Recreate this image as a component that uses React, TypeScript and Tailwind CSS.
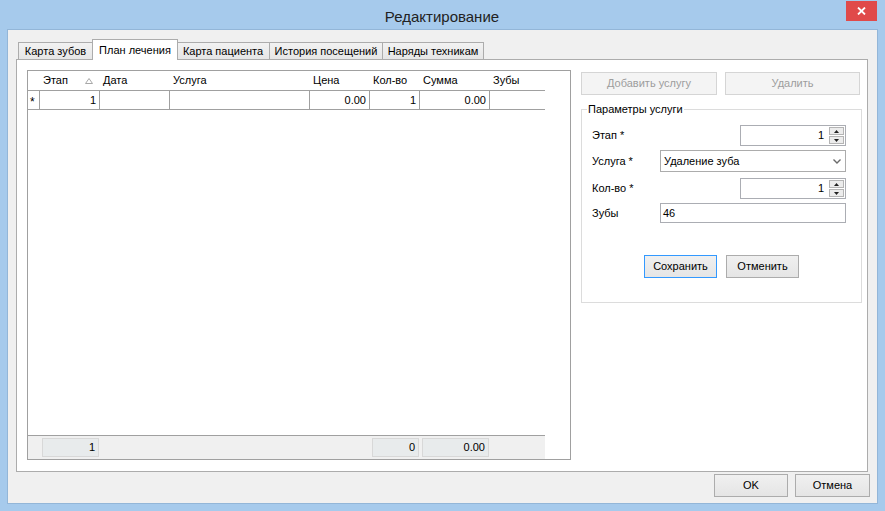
import React from "react";

const tabs = [
  { label: "Карта зубов", w: "w-[75px]" },
  { label: "План лечения", w: "w-[86px]", active: true },
  { label: "Карта пациента", w: "w-[94px]" },
  { label: "История посещений", w: "w-[114px]" },
  { label: "Наряды техникам", w: "w-[102px]" },
];

const columns = [
  { title: "Этап", w: "w-[60px]", value: "1", sort: true },
  { title: "Дата", w: "w-[70px]", value: "" },
  { title: "Услуга", w: "w-[140px]", value: "" },
  { title: "Цена", w: "w-[60px]", value: "0.00" },
  { title: "Кол-во", w: "w-[50px]", value: "1" },
  { title: "Сумма", w: "w-[70px]", value: "0.00" },
  { title: "Зубы", w: "w-[55px]", value: "" },
];

// footer totals, aligned to the column slots
const totals: (string | null)[] = ["1", null, null, null, "0", "0.00", null];

function WinButton({ children, className = "", primary = false, disabled = false }: { children: React.ReactNode; className?: string; primary?: boolean; disabled?: boolean }) {
  const look = disabled
    ? "bg-[#f4f4f4] border-[#d5d5d5] text-[#9d9d9d]"
    : primary
      ? "bg-gradient-to-b from-[#f0f0f0] to-[#e5e5e5] border-[#3399ff] text-black"
      : "bg-gradient-to-b from-[#f0f0f0] to-[#e5e5e5] border-[#acacac] text-black";
  return <button className={`h-[23px] border flex items-center justify-center leading-none ${look} ${className}`}>{children}</button>;
}

function Spinner({ value }: { value: string }) {
  return (
    <div className="w-[106px] h-[21px] border border-[#abadb3] bg-white flex items-center">
      <div className="flex-1 text-right pr-[5px]">{value}</div>
      <div className="w-[15px] h-full flex flex-col gap-px py-px mr-px">
        <div className="flex-1 border border-[#b4b4b4] bg-[#ececec] flex items-center justify-center">
          <svg width="5" height="3" viewBox="0 0 5 3"><path d="M0 3 L2.5 0 L5 3 Z" fill="#202020" /></svg>
        </div>
        <div className="flex-1 border border-[#b4b4b4] bg-[#ececec] flex items-center justify-center">
          <svg width="5" height="3" viewBox="0 0 5 3"><path d="M0 0 L5 0 L2.5 3 Z" fill="#202020" /></svg>
        </div>
      </div>
    </div>
  );
}

export default function App() {
  return (
    <div className="w-[885px] h-[511px] bg-[#a6caec] flex flex-col font-['Liberation_Sans',Arial,sans-serif] text-[11px] text-black overflow-hidden">
      {/* Title bar */}
      <div className="h-[29px] shrink-0 flex pl-[38px]">
        <div className="flex-1 text-center text-[15px] text-[#222] pt-[9px] leading-none">Редактирование</div>
        <div className="w-[31px] h-[20px] mt-px mr-[8px] bg-[#e04a4a] flex items-center justify-center">
          <svg width="9" height="8" viewBox="0 0 9 8">
            <path d="M1 0.5 L8 7.5 M8 0.5 L1 7.5" stroke="white" strokeWidth="1.8" />
          </svg>
        </div>
      </div>

      {/* Client area */}
      <div className="flex-1 mx-[7px] mb-[7px] border border-[#93b6d8] bg-[#f0f0f0] flex flex-col pt-[9px]">
        {/* Tab strip */}
        <div className="h-[20px] flex items-end pl-[10px]">
          {tabs.map((t, i) => (
            <div
              key={t.label}
              className={`${t.w} ${i > 0 ? "-ml-px" : ""} border-t border-x border-[#acacac] flex items-center justify-center ${
                t.active ? "h-[21px] -mb-px bg-white relative z-10 -ml-[2px] -mr-[1px]" : "h-[17px] bg-gradient-to-b from-[#f2f2f2] to-[#e6e6e6]"
              }`}
            >
              {t.label}
            </div>
          ))}
        </div>

        {/* Tab page */}
        <div className="ml-[8px] w-[852px] h-[413px] shrink-0 border border-[#acacac] bg-white flex items-start pl-[10px] pt-[10px]">
          {/* Data grid */}
          <div className="w-[544px] h-[390px] border border-[#a0a0a0] bg-white flex flex-col">
            <div className="flex h-[19px] shrink-0">
              <div className="w-[12px]" />
              {columns.map((c) => (
                <div key={c.title} className={`${c.w} pl-[3px] flex items-center`}>
                  <span>{c.title}</span>
                  {c.sort && (
                    <svg className="ml-auto mr-[7px]" width="8" height="6" viewBox="0 0 8 6">
                      <path d="M0.5 5.5 L4 0.5 L7.5 5.5 Z" fill="none" stroke="#a8a8a8" />
                    </svg>
                  )}
                </div>
              ))}
            </div>
            <div className="flex h-[20px] w-[517px] border-y border-[#a0a0a0] shrink-0">
              <div className="w-[12px] border-r border-[#a0a0a0] flex items-center pl-[2px] text-[12px] leading-none pt-[3px]">*</div>
              {columns.map((c) => (
                <div key={c.title} className={`${c.w} border-r border-[#a0a0a0] last:border-r-0 flex items-center justify-end pr-[3px]`}>
                  {c.value}
                </div>
              ))}
            </div>
            <div className="flex-1" />
            <div className="h-[24px] w-[517px] border-t border-[#a0a0a0] bg-[#f0f0f0] flex items-center shrink-0">
              <div className="w-[12px]" />
              {columns.map((c, i) => (
                <div key={c.title} className={`${c.w} pl-[2px] pr-px`}>
                  {totals[i] !== null && (
                    <div className="h-[19px] bg-[#e8ebec] border border-[#d8d8d8] flex items-center justify-end pr-[3px]">{totals[i]}</div>
                  )}
                </div>
              ))}
            </div>
          </div>

          {/* Right panel */}
          <div className="ml-[10px] mt-[2px] w-[281px] flex flex-col">
            <div className="flex gap-[8px]">
              <WinButton disabled className="w-[136px]">Добавить услугу</WinButton>
              <WinButton disabled className="w-[135px]">Удалить</WinButton>
            </div>
            <fieldset className="mt-[8px] border border-[#dcdcdc] w-[281px] pb-[24px]">
              <legend className="ml-[5px] px-px leading-[13px]">Параметры услуги</legend>
              <div className="pt-[9px] pl-[10px] pr-[15px]">
                <div className="flex items-center h-[21px]">
                  <div className="w-[68px]">Этап *</div>
                  <div className="flex-1 flex justify-end"><Spinner value="1" /></div>
                </div>
                <div className="flex items-center h-[22px] mt-[4px]">
                  <div className="w-[68px]">Услуга *</div>
                  <div className="flex-1 h-full border border-[#acacac] bg-white flex items-center pl-[3px] pr-[4px]">
                    <span className="flex-1">Удаление зуба</span>
                    <svg width="8" height="5" viewBox="0 0 8 5"><path d="M0.5 0.5 L4 4 L7.5 0.5" fill="none" stroke="#6a6a6a" strokeWidth="1.4" /></svg>
                  </div>
                </div>
                <div className="flex items-center h-[21px] mt-[6px]">
                  <div className="w-[68px]">Кол-во *</div>
                  <div className="flex-1 flex justify-end"><Spinner value="1" /></div>
                </div>
                <div className="flex items-center h-[20px] mt-[4px]">
                  <div className="w-[68px]">Зубы</div>
                  <div className="flex-1 h-full border border-[#abadb3] bg-white flex items-center pl-[2px]">46</div>
                </div>
              </div>
              <div className="flex justify-center gap-[9px] mt-[32px]">
                <WinButton primary className="w-[73px]">Сохранить</WinButton>
                <WinButton className="w-[73px]">Отменить</WinButton>
              </div>
            </fieldset>
          </div>
        </div>

        {/* Dialog buttons */}
        <div className="flex justify-end gap-[7px] pr-[7px] mt-[2px]">
          <WinButton className="w-[74px]">OK</WinButton>
          <WinButton className="w-[75px]">Отмена</WinButton>
        </div>
      </div>
    </div>
  );
}
